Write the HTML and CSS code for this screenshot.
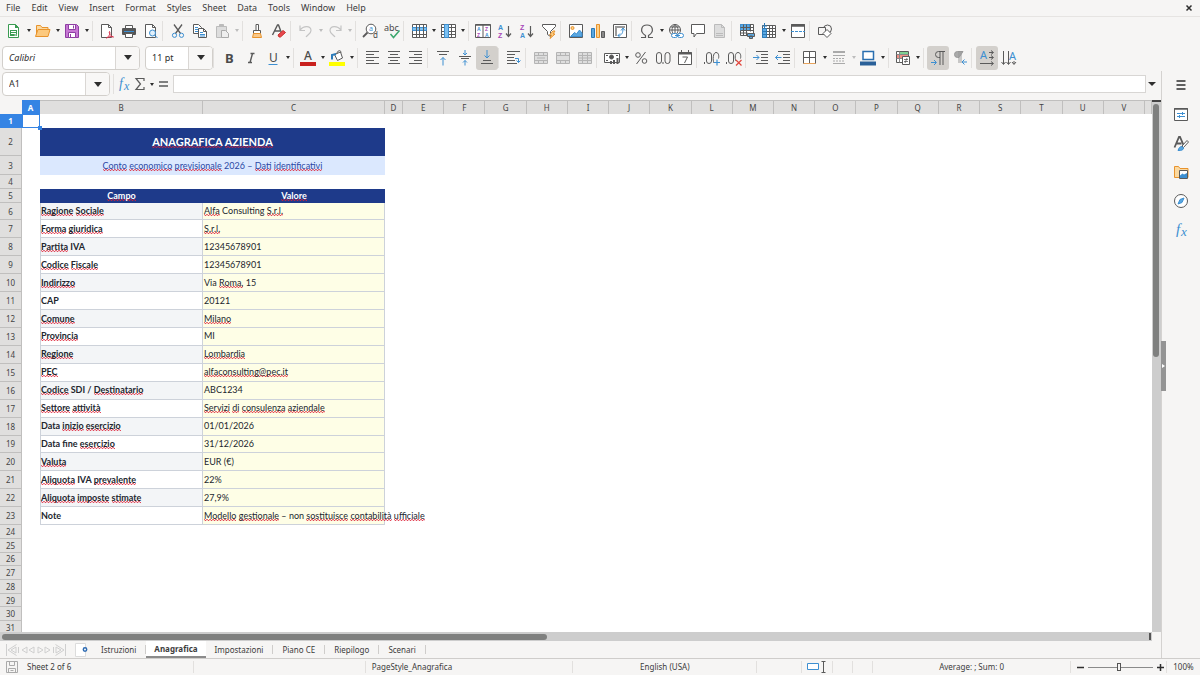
FILE: index.html
```html
<!DOCTYPE html>
<html lang="it">
<head>
<meta charset="utf-8">
<title>Anagrafica</title>
<link rel="stylesheet" href="styles.css">
</head>
<body>
<header class="menubar">
  <nav class="menus">
    <button>File</button><button>Edit</button><button>View</button><button>Insert</button><button>Format</button><button>Styles</button><button>Sheet</button><button>Data</button><button>Tools</button><button>Window</button><button>Help</button>
  </nav>
  <button class="close" aria-label="Close"><svg width="8" height="8" viewBox="0 0 8 8"><path class="dark" stroke-width="1.5" d="M1.500 1.500l5 5M6.500 1.500l-5 5"/></svg></button>
</header>

<div class="toolbar" role="toolbar" aria-label="Standard">
  <button class="tb" aria-label="New"><svg viewBox="0 0 16 16"><path fill="#fff" stroke="#3a9b52" d="M2.500 1.500h7l3 3v10h-10z"/><path fill="#3a9b52" stroke="none" d="M9 1l4 4h-4zM4 7h7v6H4z"/><path stroke="#fff" d="M5 8.500h5M5 10.500h5M8.500 12h2"/></svg></button><button class="arrow" aria-label="New options"></button>
  <button class="tb" aria-label="Open"><svg viewBox="0 0 16 16"><path fill="#fbd9a0" stroke="#e8932c" d="M1.500 13V2.500h4l1.500 2h6v2"/><path fill="#fcc97e" stroke="#e8932c" d="M.5 13.500l2.500-7h12l-2 7z"/></svg></button><button class="arrow" aria-label="Open options"></button>
  <button class="tb" aria-label="Save"><svg viewBox="0 0 16 16"><path fill="#c777d4" stroke="#8e3ea3" d="M1.500 1.500h11l2 2v11h-13z"/><path fill="#fff" stroke="#8e3ea3" d="M4.500 1.500h7v5h-7zM4.500 9.500h7v5h-7z"/><path stroke="#8e3ea3" d="M9.500 2.500v3M6.500 11v3"/></svg></button><button class="arrow" aria-label="Save options"></button>
  <span class="sep"></span>
  <button class="tb" aria-label="Export as PDF"><svg viewBox="0 0 16 16"><path fill="#fff" d="M2.500 1.500h7l3 3v10h-10z"/><path d="M9.500 1.500v3h3"/><path stroke="#d9304a" d="M7.500 15c3-2 4-4.500 3-6.500-1 1 1 5 4 5.500-2-1-5 0-7 1z"/></svg></button>
  <button class="tb" aria-label="Print"><svg viewBox="0 0 16 16"><path fill="#fff" d="M4.500 5V2.500h7V5"/><rect x="1" y="5" width="14" height="7" rx="1" fill="#555" stroke="none"/><path stroke="#3d8fd1" d="M3 8.500h10"/><path fill="#fff" d="M4.500 10.500h7v4h-7z"/></svg></button>
  <button class="tb" aria-label="Print preview"><svg viewBox="0 0 16 16"><path fill="#fff" d="M2.500 1.500h7l3 3v10h-10z"/><path d="M9.500 1.500v3h3"/><circle cx="9.500" cy="10" r="3" fill="#e2f0fb" stroke="#3d8fd1"/><path stroke="#3d8fd1" d="M11.500 12l3 3"/></svg></button>
  <span class="sep"></span>
  <button class="tb" aria-label="Cut"><svg viewBox="0 0 16 16"><path stroke-width="1.300" d="M4 1.500l6.500 9M12 1.500l-6.500 9"/><circle cx="4.500" cy="12.300" r="2.100" stroke="#3d8fd1"/><circle cx="11.500" cy="12.300" r="2.100" stroke="#3d8fd1"/></svg></button>
  <button class="tb" aria-label="Copy"><svg viewBox="0 0 16 16"><path fill="#fff" d="M1.500 1.500h5l3 3v6h-8z"/><path fill="#fff" d="M6.500 5.500h5l3 3v6h-8z"/><path d="M11.500 5.500v3h3"/><path stroke="#3d8fd1" d="M3 4.500h3M3 6.500h3M3 8.500h3M8 9.500h3M8 11.500h5M8 13h5"/></svg></button>
  <button class="tb" aria-label="Paste" disabled><svg viewBox="0 0 16 16"><path fill="#ddd" stroke="#bbb" d="M2.500 3.500h10v11h-10z"/><path fill="#bbb" stroke="#bbb" d="M5.500 1.500h4v2h-4z"/><path fill="#eee" stroke="#aaa" d="M7.500 7.500h4l3 3v4h-7z"/></svg></button><button class="arrow dim" aria-label="Paste options" disabled></button>
  <span class="sep"></span>
  <button class="tb" aria-label="Clone formatting"><svg viewBox="0 0 16 16"><path fill="#fff" d="M7 7V1.500h2.500V7M4.500 7.500h7v3h-7z"/><path fill="#f8c88a" stroke="#e8932c" d="M4.500 10.500h7l1 4h-9z"/></svg></button>
  <button class="tb" aria-label="Clear formatting"><svg viewBox="0 0 16 16"><path stroke-width="1.400" d="M1.500 12L6.500 2h1l3 8M4 8h5"/><path fill="#e8474f" stroke="#c9302c" d="M7 12l5-4.500 2.500 2-5 4.500h-1.500z"/></svg></button>
  <span class="sep"></span>
  <button class="tb" aria-label="Undo" disabled><svg viewBox="0 0 16 16"><path stroke="#c4c4c4" stroke-width="1.200" d="M2 2.500v5h5M2.300 7C5 3 13 2 13 7.500c0 3-3 4-5 6.500"/></svg></button><button class="arrow dim" aria-label="Undo list" disabled></button>
  <button class="tb" aria-label="Redo" disabled><svg viewBox="0 0 16 16"><path stroke="#c4c4c4" stroke-width="1.200" d="M14 2.500v5H9M13.700 7C11 3 3 2 3 7.500c0 3 3 4 5 6.500"/></svg></button><button class="arrow dim" aria-label="Redo list" disabled></button>
  <span class="sep"></span>
  <button class="tb" aria-label="Find and replace"><svg viewBox="0 0 16 16"><circle cx="9" cy="6" r="4.800" fill="#fff"/><path stroke-width="1.800" d="M5.500 9.500L1 14"/><text x="7" y="8" font-size="7" class="blue">a</text><text x="11" y="15" font-size="8">d</text></svg></button>
  <button class="tb" aria-label="Spelling"><svg viewBox="0 0 16 16"><text x="0" y="8" font-size="9">abc</text><path stroke="#3aa76d" stroke-width="1.500" d="M6.500 11l3 3.500 6-7"/></svg></button>
  <span class="sep"></span>
  <button class="tb" aria-label="Row"><svg viewBox="0 0 16 16"><path fill="#fff" d="M1.500 1.500h14v13h-14z"/><path fill="#7cc0f0" stroke="#3d8fd1" d="M1.500 4.500h14v3h-14z"/><path d="M5.500 1.500v13M8.500 1.500v13M12.500 1.500v13M1.500 11.500h14"/></svg></button><button class="arrow" aria-label="Row options"></button>
  <button class="tb" aria-label="Column"><svg viewBox="0 0 16 16"><path fill="#fff" d="M1.500 1.500h14v13h-14z"/><path d="M1.500 4.500h14M1.500 8.500h14M1.500 11.500h14M11.500 1.500v13"/><path fill="#7cc0f0" stroke="#3d8fd1" d="M4.500 1.500h4v13h-4z"/></svg></button><button class="arrow" aria-label="Column options"></button>
  <span class="sep"></span>
  <button class="tb" aria-label="Sort"><svg viewBox="0 0 16 16"><path fill="#fff" d="M.5 1.500h15v13H.5zM8 2v12"/><path stroke-width="1.500" d="M.5 2h15"/><text x="2" y="8" class="blue s6">A</text><text x="2" y="14" class="violet s6">Z</text><text x="10" y="8" class="violet s6">Z</text><text x="10" y="14" class="blue s6">A</text></svg></button>
  <button class="tb" aria-label="Sort ascending"><svg viewBox="0 0 16 16"><text x="1" y="7" class="blue s8">A</text><text x="1" y="15" class="violet s8">Z</text><path stroke-width="1.200" d="M11.500 3v10M9 10.500l2.500 3 2.500-3"/></svg></button>
  <button class="tb" aria-label="Sort descending"><svg viewBox="0 0 16 16"><text x="1" y="7" class="violet s8">Z</text><text x="1" y="15" class="blue s8">A</text><path stroke-width="1.200" d="M11.500 3v10M9 10.500l2.500 3 2.500-3"/></svg></button>
  <button class="tb" aria-label="AutoFilter"><svg viewBox="0 0 16 16"><path fill="#fff" d="M1.500 1.500h13v2l-5 5v5l-3-2v-3l-5-5z"/><path fill="#fbd08a" stroke="#e8932c" d="M12 8l-3.500 4h2l-1.500 3.500 5-4.500h-2l2-3z"/></svg></button>
  <span class="sep"></span>
  <button class="tb" aria-label="Image"><svg viewBox="0 0 16 16"><path fill="#fff" d="M1.500 1.500h13v13h-13z"/><circle cx="4.500" cy="5" r="1.500" fill="#fbd08a" stroke="#e8932c"/><path fill="#5aa7e0" stroke="#3d8fd1" d="M2.500 13.500l4-4 2 1.500 3-4 2.500 3v3.500z"/></svg></button>
  <button class="tb" aria-label="Chart"><svg viewBox="0 0 16 16"><path fill="#5aa7e0" stroke="#2a7ab9" d="M1.500 5.500h3v9h-3z"/><path fill="#fbd08a" stroke="#e8932c" d="M6.500 1.500h3v13h-3z"/><path fill="#888" d="M11.500 8.500h3v6h-3z"/></svg></button>
  <button class="tb" aria-label="Pivot table"><svg viewBox="0 0 16 16"><path fill="#fff" d="M1.500 1.500h13v13h-13z"/><path stroke="#999" stroke-width="2" d="M3 4h10M4 3v10"/><path stroke="#3d8fd1" d="M6 12.500c4 0 5-3 5-7M8 10.500l-2 2 2 2M9 7.500l2-2.500 2 2.500"/></svg></button>
  <span class="sep"></span>
  <button class="tb" aria-label="Special character"><svg viewBox="0 0 16 16"><path stroke-width="1.200" d="M2 14.500h4.500v-2C0 8.500 2.500 2 8 2s8 6.500 1.500 10.500v2H14"/></svg></button><button class="arrow" aria-label="Special character options"></button>
  <button class="tb" aria-label="Hyperlink"><svg viewBox="0 0 16 16"><circle cx="7" cy="7" r="5.500" fill="#fff"/><path d="M1.500 7h11M2.500 4h9M7 1.500v11M7 1.500c-4 3-4 8 0 11M7 1.500c4 3 4 8 0 11"/><rect x="3.500" y="10.500" width="6" height="4" rx="2" fill="#fff" stroke="#3d8fd1"/><rect x="9.500" y="10.500" width="6" height="4" rx="2" fill="#fff" stroke="#3d8fd1"/><path stroke="#3d8fd1" d="M7 12.500h5"/></svg></button>
  <button class="tb" aria-label="Comment"><svg viewBox="0 0 16 16"><path fill="#fff" d="M1.500 1.500h13v9h-8l-2.500 3.500v-3.500h-2.500z"/></svg></button>
  <button class="tb" aria-label="Headers and footers" disabled><svg viewBox="0 0 16 16"><path fill="#ddd" stroke="#bbb" d="M2.500 1.500h7l3 3v10h-10z"/><path stroke="#bbb" d="M4 10.500h7M4 12.500h7M9.500 1.500v3h3"/></svg></button>
  <span class="sep"></span>
  <button class="tb" aria-label="Print area"><svg viewBox="0 0 16 16"><path fill="#fff" d="M1.500 1.500h13v11h-13z"/><path fill="#5aa7e0" stroke="#3d8fd1" d="M1.500 1.500h9v6h-9z"/><path d="M1.500 4.500h13M1.500 7.500h13M1.500 10h7M4.500 1.500v11M7.500 1.500v11M11.500 1.500v7"/><path fill="#5aa7e0" d="M8.500 10.500h7v3h-7zM10.500 13h3v2.500h-3z"/></svg></button>
  <button class="tb" aria-label="Freeze"><svg viewBox="0 0 16 16"><path fill="#fff" d="M1.500 2.500h13v12h-13z"/><path fill="#5aa7e0" stroke="#2a7ab9" d="M1.500 5.500h4v9h-4z"/><path d="M5.500 5.500h9M5.500 8.500h9M5.500 11.500h9M8.500 2.500v12M11.500 2.500v12"/><path stroke="#2a7ab9" d="M3.500 0v5M1 3h5M1.500 8.500h4M1.500 11.500h4"/></svg></button><button class="arrow" aria-label="Freeze options"></button>
  <button class="tb" aria-label="Split window"><svg viewBox="0 0 16 16"><path fill="#fff" d="M1.500 1.500h13v13h-13z"/><path stroke-width="2.500" d="M1 2.500h14"/><path stroke="#3d8fd1" stroke-dasharray="3 1" d="M1 8.500h14"/></svg></button>
  <span class="sep"></span>
  <button class="tb" aria-label="Draw functions"><svg viewBox="0 0 16 16"><circle cx="10.500" cy="6" r="4"/><path fill="#f6f5f4" d="M1.500 4.500h7v7h-7z"/><path fill="#fff" d="M10 6.500l4 4-4 4-4-4z"/></svg></button>
</div>

<div class="toolbar format" role="toolbar" aria-label="Formatting">
  <div class="combo font"><input class="italic" value="Calibri" aria-label="Font name"><button aria-label="Font list"></button></div>
  <div class="combo size"><input value="11 pt" aria-label="Font size"><button aria-label="Size list"></button></div>
  <span class="sep"></span>
  <button class="tb" aria-label="Bold"><svg viewBox="0 0 16 16"><text x="4" y="13" font-size="13" font-weight="700">B</text></svg></button>
  <button class="tb" aria-label="Italic"><svg viewBox="0 0 16 16"><path stroke-width="1.400" d="M9.500 3.500l-2.500 9M7.500 3.500h4M5 12.500h4"/></svg></button>
  <button class="tb" aria-label="Underline"><svg viewBox="0 0 16 16"><text x="4" y="12" font-size="12">U</text><path stroke="#3d8fd1" d="M3.500 14.500h9"/></svg></button><button class="arrow" aria-label="Underline options"></button>
  <span class="sep"></span>
  <button class="tb" aria-label="Font color"><svg viewBox="0 0 16 16"><text x="4" y="10" font-size="12" font-weight="500">A</text><path fill="#c9211e" stroke="none" d="M0 12h16v4H0z"/></svg></button><button class="arrow" aria-label="Font color options"></button>
  <button class="tb" aria-label="Background color"><svg viewBox="0 0 16 16"><path fill="#fff" d="M5.500 4.500l6-2.500 2 6-5 2.500zM8 3.500c0-3 4-4 4-1"/><path stroke="#2a7ab9" stroke-width="2" d="M3 9.500V5l4-1"/><path fill="#ff0" stroke="none" d="M0 12h16v4H0z"/></svg></button><button class="arrow" aria-label="Background color options"></button>
  <span class="sep"></span>
  <button class="tb" aria-label="Align left"><svg viewBox="0 0 16 16"><path d="M2 1.500h13M2 4.500h8M2 7.500h13M2 10.500h8M2 13.500h13"/></svg></button>
  <button class="tb" aria-label="Align center"><svg viewBox="0 0 16 16"><path d="M2 1.500h12M4 4.500h8M2 7.500h12M4 10.500h8M2 13.500h12"/></svg></button>
  <button class="tb" aria-label="Align right"><svg viewBox="0 0 16 16"><path d="M1 1.500h13M6 4.500h8M1 7.500h13M6 10.500h8M1 13.500h13"/></svg></button>
  <span class="sep"></span>
  <button class="tb" aria-label="Align top"><svg viewBox="0 0 16 16"><path d="M2 1.500h12M4 4.500h8"/><path stroke="#3d8fd1" d="M8 15.500v-8M5.500 10L8 7.500l2.500 2.500"/></svg></button>
  <button class="tb" aria-label="Center vertically"><svg viewBox="0 0 16 16"><path d="M2 6.500h12M4 8.500h8"/><path stroke="#3d8fd1" d="M8 0v5M6 3l2 2 2-2M8 15.500v-5M6 12.500l2-2 2 2"/></svg></button>
  <button class="tb on" aria-label="Align bottom"><svg viewBox="0 0 16 16"><path d="M4 10.500h8M2 13.500h12"/><path stroke="#3d8fd1" d="M8 0v8M5.500 5.500L8 8l2.500-2.500"/></svg></button>
  <span class="sep"></span>
  <button class="tb" aria-label="Wrap text"><svg viewBox="0 0 16 16"><path d="M1 1.500h13M1 4.500h8M1 7.500h7M1 10.500h8M1 13.500h10"/><path stroke="#3d8fd1" d="M9 8.500h3.500v4M10.500 10.500l2 2 2-2"/></svg></button>
  <span class="sep"></span>
  <button class="tb" aria-label="Merge and center" disabled><svg viewBox="0 0 16 16"><path class="dis" d="M1.500 2.500h13v11h-13zM1.500 5.500h13M1.500 10.500h13M5.500 2.500v3M10.500 2.500v3M5.500 10.500v3M10.500 10.500v3M4 8h8"/></svg></button>
  <button class="tb" aria-label="Merge cells" disabled><svg viewBox="0 0 16 16"><path class="dis" d="M1.500 2.500h13v11h-13zM1.500 5.500h13M1.500 10.500h13M5.500 2.500v3M10.500 2.500v3M5.500 10.500v3M10.500 10.500v3"/></svg></button>
  <button class="tb" aria-label="Unmerge cells" disabled><svg viewBox="0 0 16 16"><path class="dis" d="M1.500 2.500h13v11h-13zM1.500 5.500h13M1.500 10.500h13M5.500 2.500v11M10.500 2.500v11M1.500 8h13"/></svg></button>
  <span class="sep"></span>
  <button class="tb" aria-label="Format as currency"><svg viewBox="0 0 16 16"><path fill="#fff" d="M.5 3.500h15v9H.5z"/><circle cx="7.500" cy="7" r="2" fill="#555"/><path d="M2 5.500h2M12 5.500h2M2 10.500h2"/><path stroke-width="2" d="M7 11v3M10 10v4M13.500 8v6"/></svg></button><button class="arrow" aria-label="Currency options"></button>
  <button class="tb" aria-label="Format as percent"><svg viewBox="0 0 16 16"><circle cx="5" cy="5" r="2.300"/><circle cx="11.500" cy="11" r="2.300"/><path d="M12.500 2l-9 12"/></svg></button>
  <button class="tb" aria-label="Format as number"><svg viewBox="0 0 16 16"><rect x="1.500" y="2.500" width="5" height="11" rx="2.500"/><rect x="10" y="2.500" width="5" height="11" rx="2.500"/><path d="M8 12v2"/></svg></button>
  <button class="tb" aria-label="Format as date"><svg viewBox="0 0 16 16"><path fill="#fff" d="M1.500 2.500h13v12h-13z"/><path stroke-width="2" d="M1 3.500h14"/><path d="M4.500 0v3M11.500 0v3M5.500 7h5l-3 6"/></svg></button>
  <span class="sep"></span>
  <button class="tb" aria-label="Add decimal place"><svg viewBox="0 0 16 16"><rect x="2.500" y="2.500" width="5" height="11" rx="2.500"/><path d="M10 13c-1.500-3-1-10.500 2-10.500s3 4 2.500 6M.5 12v2"/><path stroke="#3d8fd1" stroke-width="1.200" d="M13 9.500v6M10 12.500h6"/></svg></button>
  <button class="tb" aria-label="Delete decimal place"><svg viewBox="0 0 16 16"><rect x="2.500" y="2.500" width="5" height="11" rx="2.500"/><path d="M10 11c-1.500-3-1-8.500 2-8.500s3 4 2.500 6M.5 12v2"/><path stroke="#e0463c" stroke-width="1.200" d="M10 10l5.500 5.500M15.500 10L10 15.500"/></svg></button>
  <span class="sep"></span>
  <button class="tb" aria-label="Increase indent"><svg viewBox="0 0 16 16"><path d="M3 1.500h12M8 4.500h7M8 7.500h7M8 10.500h7M3 13.500h12"/><path stroke="#3d8fd1" d="M0 7.500h6M3.500 5L6 7.500 3.500 10"/></svg></button>
  <button class="tb" aria-label="Decrease indent"><svg viewBox="0 0 16 16"><path d="M3 1.500h12M8 4.500h7M8 7.500h7M8 10.500h7M3 13.500h12"/><path stroke="#3d8fd1" d="M6.500 7.500h-6M3 5L.5 7.500 3 10"/></svg></button>
  <span class="sep"></span>
  <button class="tb" aria-label="Borders"><svg viewBox="0 0 16 16"><path fill="#fff" d="M1.500 1.500h12v12h-12z"/><path d="M7.500 1.500v12M1.500 7.500h12"/><path stroke="#e8a35a" d="M1.500 13.500h12"/></svg></button><button class="arrow" aria-label="Borders options"></button>
  <button class="tb" aria-label="Border style" disabled><svg viewBox="0 0 16 16"><path stroke="#aaa" d="M2 2h12" stroke-width="2"/><path stroke="#aaa" d="M2 5.500h12M2 13.500h12"/><path stroke="#aaa" stroke-dasharray="2 1" d="M2 8.500h12M2 11h12"/></svg></button><button class="arrow dim" aria-label="Border style options" disabled></button>
  <button class="tb" aria-label="Border color"><svg viewBox="0 0 16 16"><path fill="#fff" stroke="#2a6fb0" stroke-width="1.500" d="M3 1.500h10.500v8H3z"/><path fill="#2a6099" stroke="none" d="M0 11.500h16v4H0z"/></svg></button><button class="arrow" aria-label="Border color options"></button>
  <span class="sep"></span>
  <button class="tb" aria-label="Conditional"><svg viewBox="0 0 16 16"><path fill="#fff" d="M1.500 1.500h12v11h-12z"/><path fill="#7fd092" stroke="none" d="M5 2h8v3H5z"/><path fill="#f08f86" stroke="none" d="M2 5h11v4H2z"/><path stroke="#888" d="M1.500 4.500h12M1.500 8.500h6M4.500 1.500v11"/><path fill="#fff" d="M7.500 6.500h7v8h-7z"/><path stroke-width=".8" d="M9 9.500h4M9 11.500h4M12 8l-2 5"/></svg></button><button class="arrow" aria-label="Conditional options"></button>
  <span class="sep"></span>
  <button class="tb on" aria-label="Left-to-right"><svg viewBox="0 0 16 16"><path d="M15 1.500H8.500a3 3 0 0 0 0 6H10M10 1.500V15M13 1.500V15"/><path stroke="#3d8fd1" d="M1 12.500h5M4 10l2.500 2.500L4 15"/></svg></button>
  <button class="tb" aria-label="Right-to-left"><svg viewBox="0 0 16 16"><path fill="#aaa" stroke="#999" d="M11 1.500H5.500a3 3 0 0 0 0 6H7zM7 1.500V13M9 1.500V13"/><path stroke="#3d8fd1" d="M15 12h-5M12.500 9.500L10 12l2.500 2.500"/></svg></button>
  <span class="sep"></span>
  <button class="tb on" aria-label="Text direction horizontal"><svg viewBox="0 0 16 16"><text x="1" y="9" font-size="11" class="blue">A</text><path d="M10 2.500h4M10 7.500h4M1 13.500h13M12 .5l2.500 2-2.500 2M12 5.500l2.500 2-2.500 2M12 11.500l2.500 2-2.500 2"/></svg></button>
  <button class="tb" aria-label="Text direction vertical"><svg viewBox="0 0 16 16"><text x="8" y="10" font-size="11" class="blue">A</text><path d="M2.500 1v13M7.500 1v13M13 11v3M.5 12l2 2.500 2-2.500M5.500 12l2 2.500 2-2.500M11 12l2 2.500 2-2.500"/></svg></button>
</div>

<div class="work">
  <main class="main">
    <div class="formulabar">
      <div class="combo name"><input value="A1" aria-label="Name box"><button aria-label="Named ranges"></button></div>
      <span class="sep"></span>
      <button class="fb" aria-label="Function wizard"><svg viewBox="0 0 16 16"><text x="3" y="12" class="blue serif" font-size="14" font-style="italic">f</text><text x="8" y="14" class="blue serif" font-size="12" font-style="italic">x</text></svg></button>
      <button class="fb" aria-label="Select function"><svg viewBox="0 0 16 16"><path stroke-width="1.200" d="M12 5V2.500H4L8.500 8 4 13.500h8V11"/></svg></button><button class="arrow" aria-label="Function options"></button>
      <button class="fb" aria-label="Formula"><svg viewBox="0 0 16 16"><path stroke-width="1.500" d="M4 6h9M4 10h9"/></svg></button>
      <input class="formula" aria-label="Input line">
      <button class="arrow big" aria-label="Expand formula bar"></button>
    </div>

    <div class="sheet">
      <div class="viewport">
      <table class="grid">
        <colgroup><col class="c-head"><col class="c-a"><col class="c-b"><col class="c-c"><col class="c-a"><col span="18"><col class="c-rest"></colgroup>
        <thead><tr><td></td><th class="cur">A</th><th>B</th><th>C</th><th>D</th><th>E</th><th>F</th><th>G</th><th>H</th><th>I</th><th>J</th><th>K</th><th>L</th><th>M</th><th>N</th><th>O</th><th>P</th><th>Q</th><th>R</th><th>S</th><th>T</th><th>U</th><th>V</th><th></th></tr></thead>
        <tbody>
        <tr><th class="cur">1</th><td class="active"><i class="handle"></i></td></tr>
        <tr class="r-title"><th>2</th><td></td><td colspan="2" class="title"><u>ANAGRAFICA</u> <u>AZIENDA</u></td></tr>
        <tr class="r-sub"><th>3</th><td></td><td colspan="2" class="subtitle"><u>Conto</u> <u>economico</u> <u>previsionale</u> 2026 – <u>Dati</u> <u>identificativi</u></td></tr>
        <tr><th>4</th></tr>
        <tr><th>5</th><td></td><td class="head"><u>Campo</u></td><td class="head"><u>Valore</u></td></tr>
        <tr class="rec alt"><th>6</th><td></td><td class="key"><u>Ragione</u> <u>Sociale</u></td><td class="val"><u>Alfa</u> Consulting <u>S.r.l.</u></td></tr>
        <tr class="rec"><th>7</th><td></td><td class="key"><u>Forma</u> <u>giuridica</u></td><td class="val"><u>S.r.l.</u></td></tr>
        <tr class="rec alt"><th>8</th><td></td><td class="key"><u>Partita</u> IVA</td><td class="val">12345678901</td></tr>
        <tr class="rec"><th>9</th><td></td><td class="key"><u>Codice</u> <u>Fiscale</u></td><td class="val">12345678901</td></tr>
        <tr class="rec alt"><th>10</th><td></td><td class="key"><u>Indirizzo</u></td><td class="val">Via <u>Roma,</u> 15</td></tr>
        <tr class="rec"><th>11</th><td></td><td class="key">CAP</td><td class="val">20121</td></tr>
        <tr class="rec alt"><th>12</th><td></td><td class="key"><u>Comune</u></td><td class="val"><u>Milano</u></td></tr>
        <tr class="rec"><th>13</th><td></td><td class="key"><u>Provincia</u></td><td class="val">MI</td></tr>
        <tr class="rec alt"><th>14</th><td></td><td class="key"><u>Regione</u></td><td class="val"><u>Lombardia</u></td></tr>
        <tr class="rec"><th>15</th><td></td><td class="key"><u>PEC</u></td><td class="val"><u>alfaconsulting@pec.it</u></td></tr>
        <tr class="rec alt"><th>16</th><td></td><td class="key"><u>Codice</u> SDI / <u>Destinatario</u></td><td class="val">ABC1234</td></tr>
        <tr class="rec"><th>17</th><td></td><td class="key"><u>Settore</u> <u>attività</u></td><td class="val"><u>Servizi</u> <u>di</u> <u>consulenza</u> <u>aziendale</u></td></tr>
        <tr class="rec alt"><th>18</th><td></td><td class="key">Data <u>inizio</u> <u>esercizio</u></td><td class="val">01/01/2026</td></tr>
        <tr class="rec"><th>19</th><td></td><td class="key">Data fine <u>esercizio</u></td><td class="val">31/12/2026</td></tr>
        <tr class="rec alt"><th>20</th><td></td><td class="key"><u>Valuta</u></td><td class="val">EUR (€)</td></tr>
        <tr class="rec"><th>21</th><td></td><td class="key"><u>Aliquota</u> IVA <u>prevalente</u></td><td class="val">22%</td></tr>
        <tr class="rec alt"><th>22</th><td></td><td class="key"><u>Aliquota</u> <u>imposte</u> <u>stimate</u></td><td class="val">27,9%</td></tr>
        <tr class="rec"><th>23</th><td></td><td class="key">Note</td><td class="val"><u>Modello</u> <u>gestionale</u> – non <u>sostituisce</u> <u>contabilità</u> <u>ufficiale</u></td></tr>
        <tr><th>24</th></tr><tr><th>25</th></tr><tr><th>26</th></tr><tr><th>27</th></tr><tr><th>28</th></tr><tr><th>29</th></tr><tr><th>30</th></tr><tr><th>31</th></tr>
        </tbody>
      </table>
      </div>
      <div class="vscroll"><div class="vthumb"></div></div>
    </div>
    <div class="hscroll"><div class="hthumb"></div><div class="hmark"></div></div>

    <div class="tabs">
      <div class="tabnav">
        <button aria-label="First sheet"><svg width="14" height="12" viewBox="0 0 14 12"><path stroke="#cfcfcf" d="M1.500 0v12M11.500.5L3 6l8.500 5.500M13.500 3v6M6 6l5-3v6z"/></svg></button>
        <button aria-label="Previous sheet"><svg width="14" height="12" viewBox="0 0 14 12"><path stroke="#cfcfcf" d="M1 6l5-3v6zM8 6l5-3v6z"/></svg></button>
        <button aria-label="Next sheet"><svg width="14" height="12" viewBox="0 0 14 12"><path stroke="#cfcfcf" d="M1 3l5 3-5 3zM8 3l5 3-5 3z"/></svg></button>
        <button aria-label="Last sheet"><svg width="14" height="12" viewBox="0 0 14 12"><path stroke="#cfcfcf" d="M12.500 0v12M2.500.5L11 6l-8.500 5.500M.5 3v6M8 6L3 3v6z"/></svg></button>
      </div>
      <button class="add" aria-label="Add sheet"><svg width="14" height="16" viewBox="0 0 14 16"><path fill="#fff" stroke="#dcdcdc" d="M.5 1.500h10v13H.5z"/><circle cx="10" cy="7.500" r="1.700" fill="#fff" stroke="#2f6cb3" stroke-width="1.500"/></svg></button>
      <button class="tab">Istruzioni</button><button class="tab sel">Anagrafica</button><button class="tab">Impostazioni</button><button class="tab">Piano CE</button><button class="tab">Riepilogo</button><button class="tab">Scenari</button>
    </div>
  </main>
  <aside class="sidebar">
    <button class="splitter" aria-label="Collapse sidebar"></button>
    <button class="sb" aria-label="Sidebar settings"><svg viewBox="0 0 16 16"><path class="dark" stroke-width="1.500" d="M3.500 4h9M3.500 8h9M3.500 12h9"/></svg></button>
    <button class="sb" aria-label="Properties"><svg viewBox="0 0 16 16"><path fill="#fff" d="M1.500 2.500h13v12h-13z"/><path stroke-width="1.500" d="M1 3h14"/><path stroke="#3d8fd1" d="M4 7.500h8M4 10.500h8M9.500 6v3M6.500 9v3"/></svg></button>
    <button class="sb" aria-label="Styles"><svg viewBox="0 0 16 16"><path stroke-width="1.800" d="M1.500 12.500L6 2h1l3.500 8M3.500 8.500h5"/><path fill="#fff" d="M9 11l5-5.500 1.500 1.500-5 5.500z"/><path fill="#5aa7e0" stroke="#3d8fd1" d="M5 15.500c1-3 2-4 4-4l1.500 1.500c0 2-2 2.500-5.500 2.500z"/></svg></button>
    <button class="sb" aria-label="Gallery"><svg viewBox="0 0 16 16"><path fill="#fbd9a0" stroke="#e8932c" d="M1.500 13.500v-11h4l1.500 2h8v9z"/><path fill="#fff" d="M6.500 6.500h8v8h-8z"/><path fill="#3d8fd1" stroke="none" d="M7 14v-2.500l2.500-2 1.500 1L14 9v5z"/></svg></button>
    <button class="sb" aria-label="Navigator"><svg viewBox="0 0 16 16"><circle cx="8" cy="8" r="6.500" fill="#fff"/><path fill="#5aa7e0" stroke="#3d8fd1" d="M11 5l-2 4.500L5 11l2-4.500z"/></svg></button>
    <button class="sb" aria-label="Functions"><svg viewBox="0 0 16 16"><text x="3" y="12" class="blue serif" font-size="15" font-style="italic">f</text><text x="8" y="14" class="blue serif" font-size="13" font-style="italic">x</text></svg></button>
  </aside>
</div>

<footer class="status">
  <span class="mid save"><svg width="12" height="12" viewBox="0 0 12 12"><path stroke="#aaa" d="M.5.5h11v11H.5zM3.500.5v4h5v-4M2.500 11.500v-4h7v4M4.500 9.500h3"/></svg></span>
  <span>Sheet 2 of 6</span>
  <span></span>
  <span>PageStyle_Anagrafica</span>
  <span class="mid">English (USA)</span>
  <span></span>
  <span class="mid"><svg width="20" height="12" viewBox="0 0 20 12"><path fill="#fff" stroke="#3d8fd1" d="M.5 2.500h11v6H.5z"/><path d="M14.500.5h4M14.500 11.500h4M16.500.5v11"/></svg></span>
  <span></span>
  <span></span>
  <span class="mid">Average: ; Sum: 0</span>
  <span class="zoom"><button aria-label="Zoom out"><svg width="7" height="7" viewBox="0 0 7 7"><path class="dark" stroke-width="1.500" d="M0 3.500h7"/></svg></button><input type="range" min="0" max="100" value="48" aria-label="Zoom"><button aria-label="Zoom in"><svg width="7" height="7" viewBox="0 0 7 7"><path class="dark" stroke-width="1.500" d="M0 3.500h7M3.500 0v7"/></svg></button></span>
  <span class="mid">100%</span>
</footer>
</body>
</html>
```
FILE: styles.css
```css
* { box-sizing: border-box; }
html, body { height: 100%; }
body {
  margin: 0;
  display: flex;
  flex-direction: column;
  overflow: hidden;
  background: #f6f5f4;
  color: #3c3c3c;
  font: 9px/12px "Noto Sans", sans-serif;
}
button {
  margin: 0;
  padding: 0;
  border: 0;
  background: none;
  color: inherit;
  font: inherit;
  display: flex;
  align-items: center;
  justify-content: center;
  flex: none;
}
input { font: inherit; color: #2e2e2e; margin: 0; min-width: 0; }
svg { fill: none; stroke: #5a5a5a; flex: none; display: block; overflow: visible; }
svg text { fill: #4a4a4a; stroke: none; font-family: "Noto Sans", sans-serif; }
svg .blue { fill: #3d8fd1; }
svg .violet { fill: #a646b8; }
svg .s6, svg .s8 { font-family: "Liberation Sans", sans-serif; font-weight: 700; }
svg .s6 { font-size: 5px; }
svg .s8 { font-size: 7px; }
svg .serif { font-family: "Liberation Serif", serif; }
svg .dark { stroke: #2e2e2e; }
svg .dis { fill: #dedede; stroke: #b4b4b4; }

/* Menu bar */
.menubar {
  display: flex;
  justify-content: space-between;
  height: 17px;
  flex: none;
  border-bottom: 1px solid #e6e4e2;
}
.menus { display: flex; gap: 11px; padding-left: 6px; }
.close { width: 22px; }

/* Toolbars */
.toolbar {
  display: flex;
  align-items: center;
  height: 27px;
  flex: none;
  padding-left: 3px;
}
.toolbar.format { padding-left: 2px; }
.tb { width: 22px; height: 24px; border-radius: 3px; }
.tb svg, .fb svg, .sb svg { width: 16px; height: 16px; }
.tb.on { background: #d3d0cc; }
.arrow { width: 7px; height: 20px; }
.arrow::before, .combo button::before {
  content: "";
  border: 3px solid transparent;
  border-top-color: #2e2e2e;
  border-bottom: 0;
}
.arrow.dim::before { border-top-color: #bdbdbd; }
.arrow::before { border-width: 3px 2px 0; }
.sep { width: 5px; height: 20px; flex: none; border-left: 1px solid #e2e0de; }
.arrow + .sep { width: 4px; margin-left: 2px; }

.combo {
  display: flex;
  flex: none;
  height: 24px;
  border: 1px solid #d2cfcb;
  border-radius: 4px;
  background: #fff;
  overflow: hidden;
}
.combo input { flex: 1; border: 0; padding: 0 0 0 6px; background: none; }
.combo input.italic { font-style: italic; }
.combo button { width: 24px; border-left: 1px solid #dad7d4; background: #f8f7f6; }
.combo button::before { border-width: 5px 4px 0; }
.combo.font { width: 138px; margin-right: 5px; }
.combo.size { width: 68px; }
.combo.name { width: 108px; margin: 0 3px 0 2px; }

/* Work area */
.work { display: flex; flex: 1; min-height: 0; }
.main { display: flex; flex-direction: column; flex: 1; min-width: 0; }
.formulabar { display: flex; align-items: center; height: 26px; flex: none; margin-bottom: 3px; }
.formulabar .sep { width: 3px; }
.fb { width: 16px; height: 22px; }
.formula {
  flex: 1;
  height: 18px;
  margin-left: 2px;
  padding: 0 4px;
  border: 1px solid #d8d6d4;
  background: #fff;
}
.arrow.big { width: 15px; padding-right: 3px; }
.arrow.big::before { border-width: 4px 4px 0; }

.sheet { display: flex; flex: 1; min-height: 0; }
.viewport { flex: 1; min-width: 0; overflow: hidden; background: linear-gradient(#f6f5f4 14px, #fff 14px); }
.grid {
  width: 100%;
  height: calc(100% + 3px);
  table-layout: fixed;
  border-collapse: separate;
  border-spacing: 0;
  font-family: Lato, sans-serif;
  color: #22262e;
}
.c-head { width: 22px; }
.c-a { width: 18px; }
.c-b { width: 163px; }
.c-c { width: 182px; }
.c-rest { width: 7px; }
.grid th, .grid td { padding: 0; white-space: nowrap; line-height: 11px; }
.grid th {
  background: #e0dfde;
  border-right: 1px solid #c0bfbe;
  border-bottom: 1px solid #c0bfbe;
  color: #444;
  font: 8px/11px "Noto Sans", sans-serif;
  text-align: center;
}
.grid thead th { height: 14px; border-top: 1px solid #c0bfbe; border-bottom: 0; }
.grid thead td { height: 14px; }
.grid th.cur { background: #3584e4; color: #fff; font-weight: 700; border-color: #3584e4; }
.grid tbody tr { height: 13px; }
.grid tbody .r-title { height: 27px; }
.grid tbody .r-sub { height: 18px; }
.grid tbody .rec { height: 17px; }
.active { position: relative; box-shadow: inset 0 0 0 1px #3584e4; }
.handle { position: absolute; right: -2px; bottom: -2px; width: 4px; height: 4px; background: #3584e4; }
.title { background: #1e3a8a; color: #fff; font-size: 11px; font-weight: 700; text-align: center; }
.grid .title { line-height: 14px; }
.subtitle { background: #dbe8fe; color: #2b49a5; text-align: center; }
.head { background: #1e3a8a; color: #fff; font-weight: 700; text-align: center; }
.rec .key, .rec .val { border-bottom: 1px solid #cdd2da; border-right: 1px solid #cdd2da; }
.rec .key { border-left: 1px solid #cdd2da; background: #fff; font-weight: 700; }
.rec.alt .key { background: #f3f5f7; }
.grid .rec .val { padding-left: 1px; background: #fefee6; }
.grid .rec td { padding-bottom: 1px; }
.grid u {
  text-decoration: none;
  background: url("data:image/svg+xml,%3Csvg xmlns='http://www.w3.org/2000/svg' width='3' height='2'%3E%3Cpath d='M0 .2L1.500 1.800L3 .2' fill='none' stroke='%23dc2035' stroke-width='1'/%3E%3C/svg%3E") left bottom repeat-x;
}

.vscroll { width: 9px; flex: none; background: #cdcdcd; border-top: 2px solid #444; padding: 2px 2px 0 1px; }
.vthumb { height: 48%; border-radius: 3px; background: #7f807f; }
.hscroll { display: flex; align-items: center; height: 9px; flex: none; margin-right: 9px; padding-left: 2px; background: #cdcdcd; }
.hthumb { width: 47.4%; height: 6px; border-radius: 3px; background: #7f807f; }
.hmark { width: 2px; height: 7px; margin-left: auto; margin-right: 1px; background: #555; }

/* Sheet tabs */
.tabs { display: flex; height: 17px; flex: none; font-size: 8px; }
.tabnav { display: flex; gap: 2px; padding-left: 5px; width: 75px; }
.add { margin-right: 2px; }
.tab { padding: 0 10px; position: relative; }
.tab::after { content: ""; position: absolute; right: 0; top: 4px; height: 9px; border-right: 1px solid #cfcdcb; }
.tab.sel { padding: 0 8px; background: #fff; font-weight: 700; border-bottom: 2px solid #8b8b8b; }
.tab.sel::after { display: none; }
.tab.sel ~ .tab { padding: 0 10px 0 9px; }

/* Sidebar */
.sidebar {
  position: relative;
  width: 39px;
  flex: none;
  border-left: 1px solid #d4d2d0;
  display: flex;
  flex-direction: column;
  align-items: center;
  gap: 5px;
  padding-top: 2px;
}
.sb { width: 24px; height: 24px; }
.splitter { position: absolute; left: -1px; top: 46%; width: 5px; height: 50px; background: #949494; }
.splitter::before { content: ""; border: 2px solid transparent; border-left: 3px solid #fff; border-right: 0; }

/* Status bar */
.status {
  display: grid;
  grid-template-columns: 21px 173fr 172fr 208fr 184fr 45fr 31px 20px 20px 198fr 96px 33px;
  align-items: center;
  height: 17px;
  flex: none;
  border-top: 1px solid #cfcdcb;
  font-size: 8px;
}
.status > span { height: 12px; padding-left: 6px; border-right: 1px solid #e2e0de; white-space: nowrap; }
.status > .mid { display: flex; align-items: center; justify-content: center; padding: 0; }
.status > .save { border: 0; padding-left: 3px; }
.status > span:last-child { border: 0; }
.status > .zoom { display: flex; align-items: center; gap: 4px; }
.zoom input { width: 65px; height: 9px; background: none; appearance: none; }
.zoom input::-webkit-slider-runnable-track { height: 8px; background: linear-gradient(#8b8b8b, #8b8b8b) center / 100% 1px no-repeat; }
.zoom input::-webkit-slider-thumb { appearance: none; width: 4px; height: 8px; border: 1px solid #555; background: #f6f5f4; }
```
